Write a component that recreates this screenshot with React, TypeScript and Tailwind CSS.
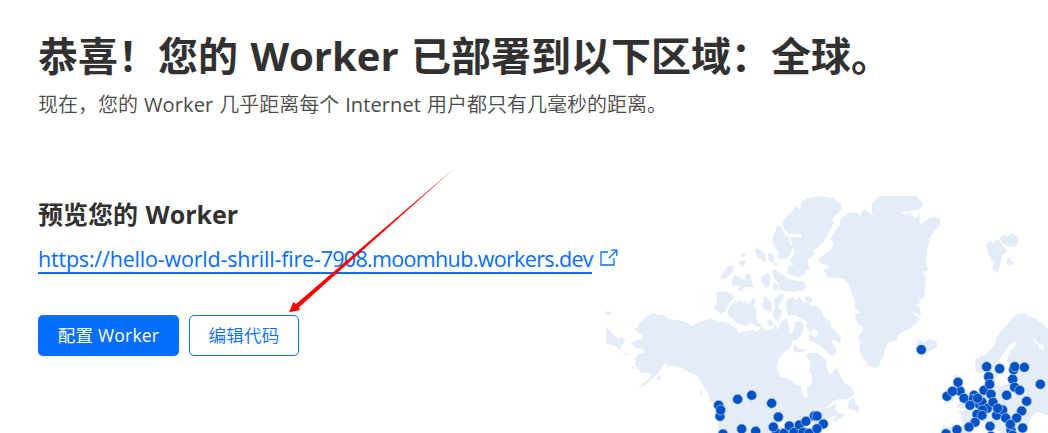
const LAND: string[] = [
  // North American mainland
  "100,416 118,412 112,405 125,394 140,378 163,368 175,376 188,374 205,386 240,392 262,400 277,409 295,396 315,392 330,384 345,392 355,399 365,394 385,399 395,409 410,416 415,429 435,422 440,424 455,419 470,426 485,410 495,422 520,416 525,399 533,421 545,394 560,384 566,400 568,429 575,432 584,409 586,394 605,392 610,414 605,434 590,449 578,452 570,474 550,489 535,509 530,534 540,559 570,569 590,584 603,589 607,612 618,626 623,619 620,594 635,579 637,559 628,544 632,524 627,509 618,500 625,489 650,489 665,499 678,509 682,539 690,554 700,544 710,532 720,554 735,579 755,591 763,609 758,619 740,626 720,626 695,637 675,657 690,652 710,641 704,654 712,668 735,672 724,682 704,696 698,688 712,678 690,682 676,694 660,729 355,729 352,694 348,664 345,639 330,634 325,614 310,589 295,559 270,549 245,534 213,526 205,532 197,519 185,534 175,549 155,569 135,584 108,596 125,584 150,564 155,549 125,549 108,529 103,514 112,494 132,486 130,476 105,474 93,459 110,451 128,451 125,434",
  // Newfoundland
  "745,636 763,620 766,642 779,650 776,668 762,660 744,658",
  // Pacific islands
  "18,408 45,440 58,446 64,440 76,454 66,464 60,480 42,466 18,462",
  "18,364 26,363 34,370 28,376 18,374",
  "68,488 78,490 86,495 76,494",
  "95,531 103,530 106,536 98,536",
  "170,566 178,557 186,561 182,568 174,571",
  "300,600 305,602 309,618 302,614",
  "152,374 160,367 170,372 165,378",
  // Arctic archipelago
  "417,220 424,210 438,212 436,223 427,230",
  "421,198 428,189 438,196 433,201",
  "361,263 380,232 401,225 398,247 381,263 365,270",
  "393,286 401,256 422,262 435,270 440,248 450,255 455,271 462,292 432,290 423,306 412,299 426,287",
  "349,307 370,304 390,308 403,324 388,339 375,365 362,372 343,356 352,329",
  "382,370 389,349 407,331 414,338 421,330 428,340 438,334 445,346 453,334 460,322 467,334 461,350 470,360 469,390 490,412 470,410 454,402 438,408 419,402 401,392 399,382 388,382",
  "465,175 480,181 494,190 499,216 487,214 475,203 464,184",
  "504,190 514,188 524,202 522,215 511,215 506,208",
  "518,222 528,218 535,225 527,229",
  "482,262 494,255 504,250 511,257 511,280 504,293 495,291 485,276",
  "518,284 526,277 534,286 531,300 520,298",
  "516,241 527,238 535,248 550,255 562,266 590,272 606,273 617,281 618,293 609,301 581,305 553,303 535,296 536,280 525,268 520,254",
  "522,329 534,314 551,312 549,330 538,342 533,355 546,360 544,376 534,395 522,385 519,370 524,353",
  "482,342 493,337 488,319 503,324 513,335 517,353 513,367 502,364 491,356",
  "502,394 512,387 522,400 514,410 503,406",
  "561,330 577,320 590,330 597,318 609,338 625,338 633,348 649,349 664,362 668,376 690,395 693,411 724,443 719,462 706,450 692,450 708,474 709,493 695,500 680,485 663,470 648,460 629,453 626,438 634,431 624,416 616,408 623,396 604,386 584,374 564,378 557,348",
  "614,320 627,319 638,330 633,338 616,334",
  "582,462 599,478 618,478 605,486 583,487",
  "520,140 532,106 542,109 552,130 565,136 572,168 577,170 574,182 563,205 540,208 533,202 536,184 526,172 518,154",
  "547,98 556,82 578,63 589,45 600,60 603,38 619,25 660,18 696,24 725,44 724,59 705,77 692,96 704,94 684,130 674,153 656,170 638,181 643,193 622,212 630,237 619,242 609,259 590,261 560,250 568,226 583,224 573,216 571,206 585,188 576,168 574,154 568,140 603,143 604,133 566,132 552,117",
  "631,427 639,414 655,422 656,433 645,443 632,438",
  // Greenland
  "816,42 837,18 950,18 970,43 960,58 905,66 910,73 930,69 947,84 959,72 959,107 980,90 1003,79 1020,86 1021,105 997,131 990,144 980,147 991,149 981,176 978,218 984,241 967,246 977,262 976,289 972,304 977,307 971,326 958,331 959,342 945,343 959,355 964,380 941,366 943,376 959,384 957,393 930,416 899,430 890,450 865,460 854,478 851,498 842,512 837,530 825,534 805,527 787,502 777,475 779,453 774,438 786,428 789,405 780,409 767,390 766,371 780,367 764,356 767,332 756,313 746,281 726,265 684,263 670,240 693,232 673,225 656,214 658,203 694,178 703,157 690,147 702,126 718,106 723,84 744,70 773,67 778,78 795,56 824,84 815,69",
  // Svalbard
  "1158,162 1171,153 1180,162 1188,151 1196,149 1222,183 1208,195 1202,219 1193,248 1184,246 1178,232 1181,222 1164,190",
  "1200,143 1212,135 1224,139 1232,128 1250,137 1257,149 1251,168 1227,171 1205,158",
  "1221,208 1231,199 1233,212 1242,216 1229,229 1219,222",
  // Iceland
  "950,456 952,450 967,452 972,461 980,450 1000,450 1010,456 1012,470 996,480 980,489 955,486 946,474",
  // British Isles
  "1060,558 1070,552 1078,558 1075,569 1090,575 1080,593 1094,602 1108,635 1104,651 1086,656 1065,650 1082,636 1074,617 1061,606",
  "1031,616 1046,596 1065,598 1068,617 1057,637 1034,641",
  // Scandinavia and western Europe
  "1344,419 1325,400 1302,384 1285,378 1273,370 1252,372 1236,385 1219,405 1195,434 1181,465 1160,491 1126,508 1126,539 1137,553 1154,546 1165,558 1170,584 1184,580 1191,561 1203,544 1207,530 1196,509 1210,491 1225,468 1240,456 1249,461 1240,475 1226,490 1221,512 1229,526 1270,518 1290,528 1257,534 1253,553 1238,558 1235,580 1198,588 1183,590 1168,607 1160,607 1160,576 1149,585 1150,608 1128,613 1115,632 1103,651 1091,663 1067,665 1085,675 1089,703 1075,711 1030,708 1026,729 1113,729 1117,714 1133,699 1160,695 1181,710 1203,729 1229,729 1228,711 1203,697 1197,682 1210,686 1229,706 1244,729 1270,729 1264,716 1285,705 1290,688 1303,674 1344,675",
];
const WATER: string[] = [
  "632,425 638,418 648,419 655,426 653,435 643,441 636,437",
  "1298,443 1321,464 1334,471 1331,481 1317,475 1315,465 1300,454",
  "1301,669 1317,666 1344,677 1344,698 1310,696 1292,693",
  "589,507 598,496 606,502 602,510",
  "610,507 620,500 621,512",
  "524,707 548,695 567,704 550,714",
  "604,704 633,690 642,705 624,713",
];
const DOTS: [number, number][] = [
  [356, 646], [360, 679], [362, 660], [413, 628], [369, 732], [425, 717],
  [455, 616], [515, 640], [535, 681], [467, 724], [530, 730], [552, 730],
  [520, 711], [568, 708], [582, 727], [598, 705], [609, 727], [627, 730],
  [618, 694], [643, 678], [651, 678], [670, 702], [651, 716],
  [964, 479],
  [1041, 619], [1080, 603], [1074, 577], [1057, 604], [1092, 625],
  [1160, 530], [1152, 601], [1166, 560], [1169, 583], [1173, 613],
  [1199, 536], [1241, 539], [1244, 530], [1273, 532], [1238, 568], [1244, 592], [1259, 601],
  [1321, 583], [1280, 634], [1265, 663], [1220, 616],
  [1122, 616], [1120, 628], [1137, 642], [1146, 636], [1133, 625], [1110, 646],
  [1162, 655], [1147, 660], [1131, 673], [1146, 676], [1179, 637],
  [1190, 676], [1208, 660], [1193, 655], [1217, 684], [1250, 684],
  [1125, 697], [1107, 711], [1071, 719], [1038, 731],
  [1170, 709], [1173, 739], [1233, 720], [1238, 736], [1231, 703], [1268, 714],
];

function CoverageMap() {
  return (
    <svg className="block h-[237px] w-[442px] shrink-0" viewBox="18 18 1326 711" aria-hidden="true">
      <g className="fill-[#e4ecf8]">
        {LAND.map((p) => <polygon key={p} points={p} />)}
      </g>
      <g className="fill-white">
        {WATER.map((p) => <polygon key={p} points={p} />)}
      </g>
      <g className="fill-[#0051c3] stroke-[#bcd2f1]" strokeWidth="2">
        {DOTS.map(([x, y]) => <circle key={`${x}-${y}`} cx={x} cy={y} r="15" />)}
      </g>
    </svg>
  );
}

export default function App() {
  return (
    <main className="relative h-[433px] w-[1048px] overflow-hidden bg-white font-['Open_Sans','Noto_Sans_CJK_SC',sans-serif] text-[#313131]">
      <header className="flex h-[196px] flex-col pt-[32px] pl-[38px] whitespace-nowrap">
        <h1 className="text-[40px] leading-[48px] font-bold [word-spacing:2px]">恭喜！您的 Worker 已部署到以下区域：全球。</h1>
        <p className="mt-[10px] text-[20px] leading-[30px] font-[350] text-[#4a4a4a] [word-spacing:0.7px]">
          现在，您的 <span className="font-normal tracking-[0.15px]">Worker</span> 几乎距离每个 <span className="font-normal tracking-[0.1px]">Internet</span> 用户都只有几毫秒的距离。
        </p>
      </header>
      <div className="flex">
        <section className="flex w-[606px] shrink-0 flex-col pt-px pl-[38px] whitespace-nowrap">
          <h2 className="text-[25px] leading-[34px] font-bold [word-spacing:1px]">预览您的 Worker</h2>
          <div className="mt-[13px] flex items-start gap-[8px] text-[#056dff]">
            <a className="h-[30px] w-[554px] shrink-0 border-b-2 border-[#056dff] text-[21.5px] leading-[30px]" href="#">
              <span className="tracking-[-0.2px]">https://hello-world-shrill-fire-</span>
              <span className="tracking-[-0.7px]">7908</span>
              <span className="tracking-[-0.65px]">.moomhub.workers.dev</span>
            </a>
            <svg className="mt-[5px] size-[18px] shrink-0" viewBox="0 0 18 18" fill="none" stroke="currentColor" strokeWidth="1.3" aria-hidden="true">
              <path d="M8 3H1v13h13V9M11 1.2h5.8V7M16.6 1.4 8.8 9.2" />
            </svg>
          </div>
          <div className="mt-[41px] flex gap-[10px] text-[17.5px]">
            <button className="h-[41px] w-[141px] rounded-[5px] bg-[#056dff] tracking-[0.2px] text-white">配置 Worker</button>
            <button className="h-[41px] w-[110px] rounded-[5px] border border-[#056dff] bg-white font-[350] tracking-[0.2px] text-[#056dff]">编辑代码</button>
          </div>
        </section>
        <CoverageMap />
      </div>
      <svg className="pointer-events-none absolute top-[168px] left-[288px] h-[145px] w-[168px]" viewBox="288 168 168 145" aria-hidden="true">
        <path className="fill-[#ff0000]" d="M453.5 169 299 307.2 300 310 289 312.2 293.3 302 296 304Z" />
      </svg>
    </main>
  );
}
